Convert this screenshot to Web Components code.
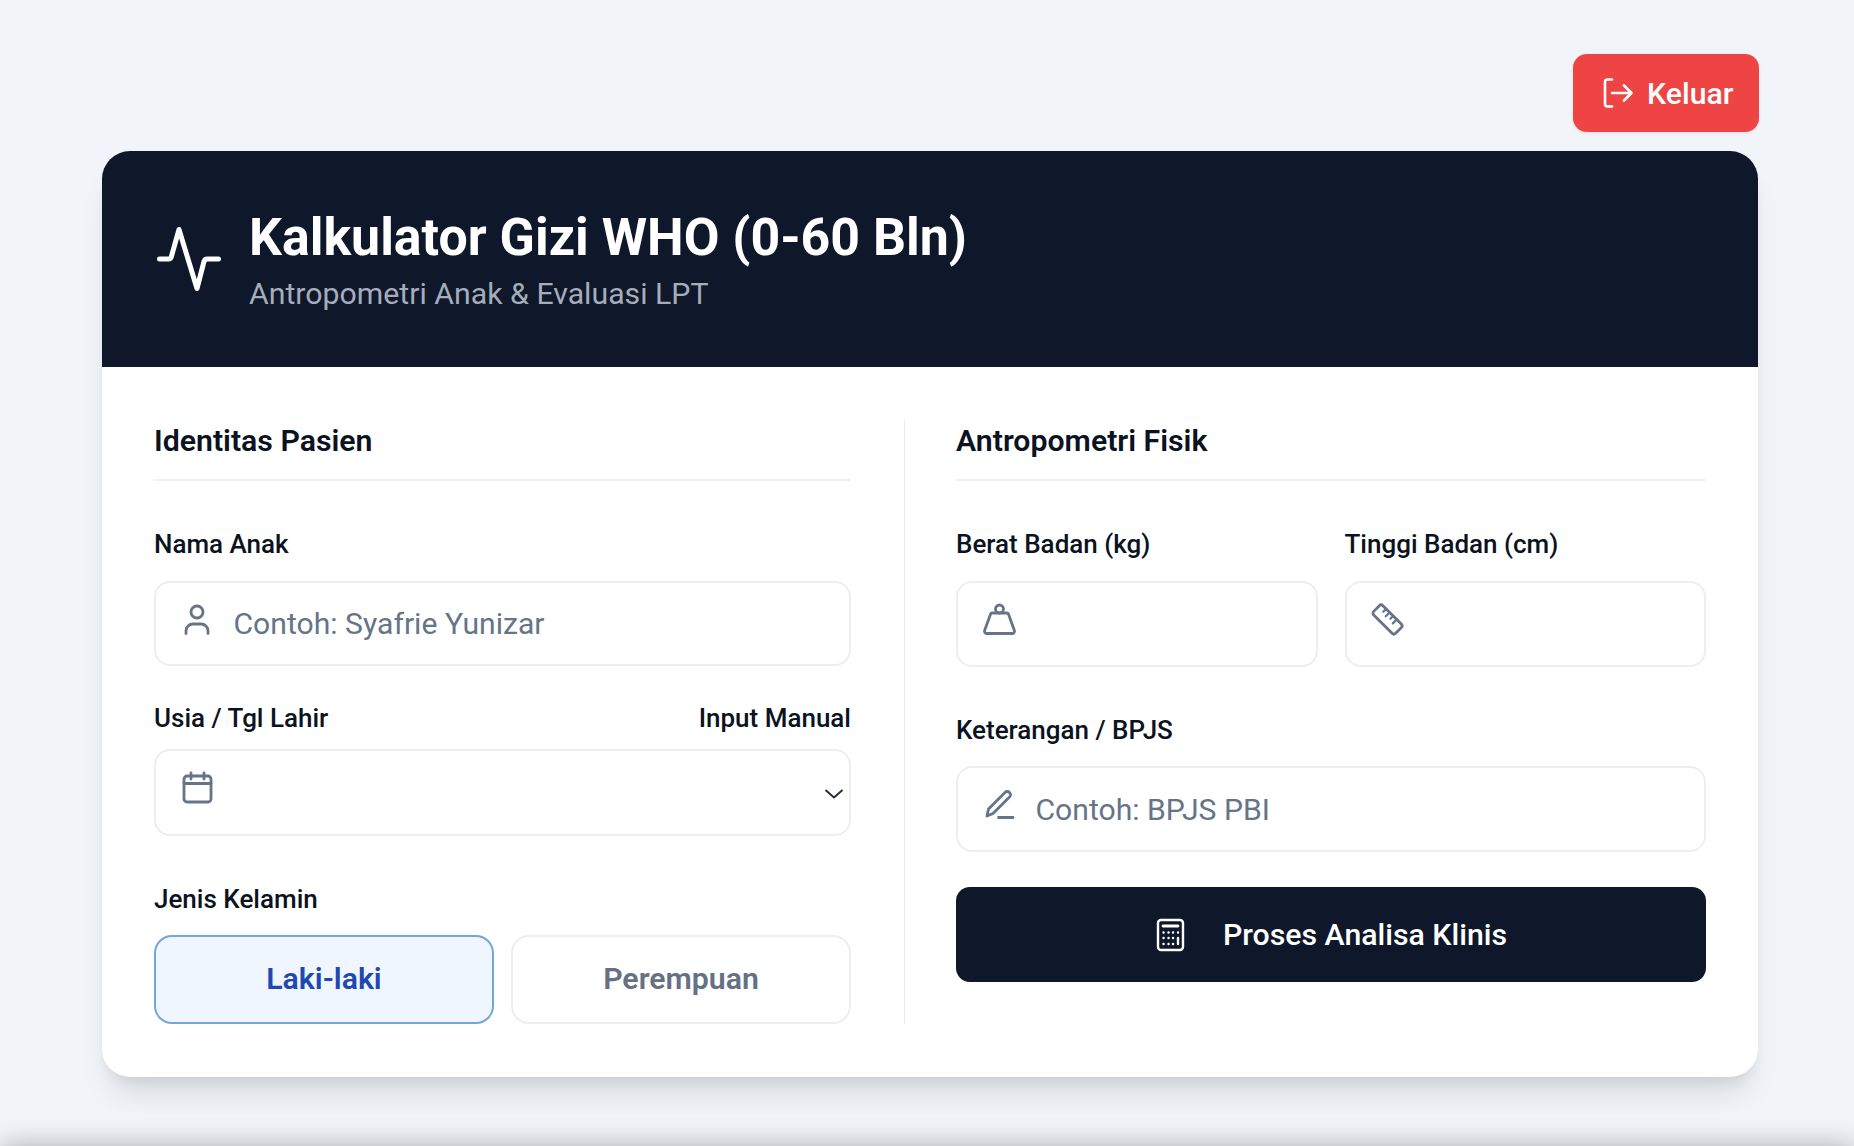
<!DOCTYPE html>
<html lang="id">
<head>
<meta charset="utf-8">
<title>Kalkulator Gizi WHO</title>
<style>
  html, body { margin: 0; height: 100%; overflow: hidden; }
  body { background: #f1f5f9; font-family: Roboto, "Liberation Sans", sans-serif; color: #0f172a; }
</style>
</head>
<body>
<gizi-app></gizi-app>
<script>
const ICONS = {
  logout: `<svg width="32" height="32" viewBox="0 0 32 32" fill="none" stroke="currentColor" stroke-width="2.6" stroke-linecap="round" stroke-linejoin="round"><path d="M11 2.500H6.500a2.500 2.500 0 0 0-2.500 2.500v22a2.500 2.500 0 0 0 2.500 2.500H11"/><path d="M11 16h19M23 8.500l7.500 7.500-7.500 7.500"/></svg>`,
  pulse: `<svg width="66" height="66" viewBox="0 0 66 66" fill="none" stroke="currentColor" stroke-width="5" stroke-linecap="round" stroke-linejoin="round"><path d="M3.500 33h9a3 3 0 0 0 2.800-2.200L23 3.500l18 59 7-27a3.500 3.500 0 0 1 3.300-2.500H62.500"/></svg>`,
  user: `<svg width="26" height="31" viewBox="0 0 26 31" fill="none" stroke="currentColor" stroke-width="2.800" stroke-linecap="round"><circle cx="13" cy="8" r="6"/><path d="M2 29.500v-2.500a7 7 0 0 1 7-7h8a7 7 0 0 1 7 7v2.500"/></svg>`,
  calendar: `<svg width="31" height="33" viewBox="0 1 31 33" fill="none" stroke="currentColor" stroke-width="2.800" stroke-linecap="round" stroke-linejoin="round"><rect x="2" y="5" width="27" height="26" rx="3"/><path d="M2 12.500h27M9 2v6M22 2v6"/></svg>`,
  weight: `<svg width="35" height="32" viewBox="0 1 35 32" fill="none" stroke="currentColor" stroke-width="2.800" stroke-linejoin="round"><circle cx="17.500" cy="6" r="4"/><path d="M10 10h15a1.500 1.500 0 0 1 1.400 1l6 16.500a2.300 2.300 0 0 1-2.200 3h-25.400a2.300 2.300 0 0 1-2.200-3l6-16.500a1.500 1.500 0 0 1 1.400-1z"/></svg>`,
  ruler: `<svg width="35" height="35" viewBox="0 0 35 35" fill="none" stroke="currentColor" stroke-width="2.800" stroke-linecap="round" stroke-linejoin="round"><g transform="rotate(45 17.500 17.500)"><rect x="2" y="11" width="31" height="13" rx="2.500"/><path d="M9 11v4M14 11v5.500M19 11v4M24 11v5.500" stroke-width="2.200"/></g></svg>`,
  pencil: `<svg width="31" height="31" viewBox="0 0 31 31" fill="none" stroke="currentColor" stroke-width="2.800" stroke-linecap="round" stroke-linejoin="round"><path d="M3 27l1.500-7L21 3.500a3 3 0 0 1 4.500 0 3 3 0 0 1 0 4.500L9 24.500z"/><path d="M14.500 28.500H29"/></svg>`,
  calc: `<svg width="29" height="34" viewBox="0 0 29 34" fill="none" stroke="currentColor" stroke-width="2.400" stroke-linecap="round" stroke-linejoin="round"><rect x="2" y="2" width="25" height="30" rx="3"/><path d="M7 8h15" stroke-width="2.800"/><path d="M7.500 14.500h.1M12.500 14.500h.1M17 14.500h.1M22 14.500h.1M7.500 20h.1M12.500 20h.1M17 20h.1M7.500 26h.1M12.500 26h.1M17 26h.1M22 20v6" stroke-width="2.400"/></svg>`,
  chevron: `<svg width="20" height="12" viewBox="0 0 20 12" fill="none" stroke="#1f2937" stroke-width="1.800"><path d="M1.500 2l8.500 7.500 8.500-7.500"/></svg>`,
};

// every element here fills its shadow root the same way
class GiziElement extends HTMLElement {
  connectedCallback() {
    if (this.shadowRoot) return;
    this.attachShadow({ mode: "open" }).innerHTML = this.render();
  }
}

class GiziLogout extends GiziElement {
  render() {
    return `<style>
      :host { display: flex; justify-content: flex-end; margin-right: -1px; }
      button {
        display: flex; align-items: center; gap: 14px; box-sizing: border-box;
        width: 186px; height: 78px; padding: 0 0 0 28px; border: 0; border-radius: 14px;
        background: #ef4444; color: #fff; font: 500 30.250px Roboto, sans-serif;
        box-shadow: 0 1px 3px rgba(15, 23, 42, 0.1);
      }
      svg { display: block; }
    </style>
    <button>${ICONS.logout}<slot></slot></button>`;
  }
}

class GiziCard extends GiziElement {
  render() {
    return `<style>
      :host {
        display: block; margin-top: 19px; border-radius: 28px; background: #fff; overflow: hidden;
        box-shadow: 0 25px 30px -8px rgba(0, 0, 0, 0.1), 0 10px 14px -6px rgba(0, 0, 0, 0.08);
      }
      .body { display: grid; grid-template-columns: 751px 1fr; padding: 52px 52px 53px; }
      ::slotted([slot="left"]) { padding-right: 53px; border-right: 1px solid #e8ebef; }
      ::slotted([slot="right"]) { padding-left: 51px; }
    </style>
    <slot name="head"></slot>
    <div class="body"><slot name="left"></slot><slot name="right"></slot></div>`;
  }
}

class GiziHeader extends GiziElement {
  render() {
    return `<style>
      :host {
        display: flex; align-items: center; gap: 27px; box-sizing: border-box; height: 216px;
        padding: 0 0 0 54px; background: #0f172a; color: #fff;
      }
      svg { display: block; }
      .text { padding-top: 2px; }
      h1 { margin: 0; font: 700 51.850px/60px Roboto, sans-serif; }
      p { margin: 8px 0 0; font: 400 30.250px/36px Roboto, sans-serif; color: #a6adba; }
    </style>
    ${ICONS.pulse}
    <div class="text"><h1>${this.getAttribute("heading")}</h1><p><slot></slot></p></div>`;
  }
}

class GiziSection extends GiziElement {
  render() {
    return `<style>
      :host { display: flex; flex-direction: column; min-width: 0; }
      h2 {
        margin: 0 0 48px; padding-bottom: 16px; border-bottom: 2px solid #eef0f3;
        font: 600 30.250px/44px Roboto, sans-serif; color: #0b1220;
      }
      .items { display: flex; flex-direction: column; }
    </style>
    <h2>${this.getAttribute("heading")}</h2>
    <div class="items"><slot></slot></div>`;
  }
}

class GiziField extends GiziElement {
  render() {
    const icon = ICONS[this.getAttribute("icon")] || "";
    const aside = this.getAttribute("aside");
    const h = this.getAttribute("box-height") || "86";
    const gap = this.getAttribute("label-gap") || "22";
    return `<style>
      :host { display: block; min-width: 0; }
      .top { display: flex; justify-content: space-between; height: 30px; margin-bottom: ${gap}px; font: 500 26px/30px Roboto, sans-serif; color: #0b1220; }
      .box {
        display: flex; align-items: center; gap: 17.500px; box-sizing: border-box; height: ${h}px;
        padding: 0 5px 0 22px; border: 2px solid #eceef2; border-radius: 16px; background: #fff;
        font: 400 30.150px Roboto, sans-serif; color: #667487;
      }
      .icon { display: flex; width: 38px; justify-content: center; margin-top: -9px; }
      .arrow { margin-left: auto; margin-top: 2px; display: flex; }
      svg { display: block; overflow: visible; }
    </style>
    <div class="top"><span>${this.getAttribute("label")}</span>${aside ? `<span>${aside}</span>` : ""}</div>
    <div class="box"><span class="icon">${icon}</span><slot></slot>${this.hasAttribute("select") ? `<span class="arrow">${ICONS.chevron}</span>` : ""}</div>`;
  }
}

class GiziToggle extends GiziElement {
  render() {
    return `<style>
      :host { display: block; }
      .top { height: 30px; margin-bottom: 21px; font: 500 26px/30px Roboto, sans-serif; color: #0b1220; }
      .row { display: grid; grid-template-columns: 1fr 1fr; gap: 17px; }
    </style>
    <div class="top">${this.getAttribute("label")}</div>
    <div class="row"><slot></slot></div>`;
  }
}

class GiziOption extends GiziElement {
  render() {
    return `<style>
      :host {
        display: flex; align-items: center; justify-content: center; box-sizing: border-box; height: 89px;
        padding-bottom: 2px; border: 2px solid #eceef2; border-radius: 18px; background: #fff; color: #667085;
        font: 600 30.250px Roboto, sans-serif;
      }
      :host([active]) { border-color: #74a7d8; background: #eff6ff; color: #2148b2; }
    </style>
    <slot></slot>`;
  }
}

class GiziSubmit extends GiziElement {
  render() {
    return `<style>
      :host { display: block; margin-top: 35px; }
      button {
        display: flex; align-items: center; justify-content: center; gap: 38px; width: 100%; height: 95px;
        padding: 0 0 0 1px; border: 0; border-radius: 14px; background: #0f172a; color: #fff; font: 500 30.250px Roboto, sans-serif;
      }
      svg { display: block; }
    </style>
    <button>${ICONS.calc}<slot></slot></button>`;
  }
}

class GiziApp extends GiziElement {
  render() {
    return `<style>
      :host { display: block; box-sizing: border-box; height: 100vh; padding: 54px 96px 0 102px; font-family: Roboto, sans-serif; }
      .pair { display: grid; grid-template-columns: 1fr 1fr; gap: 27px; margin-bottom: 48px; }
      .after-name { margin-bottom: 37px; }
      .after-age { margin-bottom: 48px; }
      .next { height: 40px; margin-top: 70px; margin-left: -102px; margin-right: -96px; background: #f1f5f9; box-shadow: 0 0 28px rgba(0, 0, 0, 0.32); }
    </style>
    <gizi-logout>Keluar</gizi-logout>
    <gizi-card>
      <gizi-header slot="head" heading="Kalkulator Gizi WHO (0-60 Bln)">Antropometri Anak &amp; Evaluasi LPT</gizi-header>
      <gizi-section slot="left" heading="Identitas Pasien">
        <gizi-field class="after-name" label="Nama Anak" icon="user" box-height="85">Contoh: Syafrie Yunizar</gizi-field>
        <gizi-field class="after-age" label="Usia / Tgl Lahir" aside="Input Manual" icon="calendar" box-height="87" label-gap="16" select></gizi-field>
        <gizi-toggle label="Jenis Kelamin">
          <gizi-option active>Laki-laki</gizi-option>
          <gizi-option>Perempuan</gizi-option>
        </gizi-toggle>
      </gizi-section>
      <gizi-section slot="right" heading="Antropometri Fisik">
        <div class="pair">
          <gizi-field label="Berat Badan (kg)" icon="weight"></gizi-field>
          <gizi-field label="Tinggi Badan (cm)" icon="ruler"></gizi-field>
        </div>
        <gizi-field label="Keterangan / BPJS" icon="pencil" label-gap="21">Contoh: BPJS PBI</gizi-field>
        <gizi-submit>Proses Analisa Klinis</gizi-submit>
      </gizi-section>
    </gizi-card>
    <div class="next"></div>`;
  }
}

customElements.define("gizi-logout", GiziLogout);
customElements.define("gizi-card", GiziCard);
customElements.define("gizi-header", GiziHeader);
customElements.define("gizi-section", GiziSection);
customElements.define("gizi-field", GiziField);
customElements.define("gizi-toggle", GiziToggle);
customElements.define("gizi-option", GiziOption);
customElements.define("gizi-submit", GiziSubmit);
customElements.define("gizi-app", GiziApp);
</script>
</body>
</html>
